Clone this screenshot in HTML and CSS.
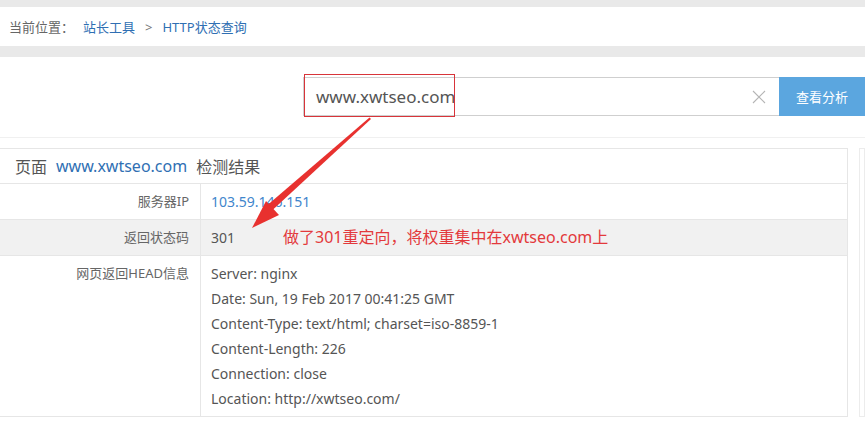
FILE: index.html
```html
<!DOCTYPE html>
<html lang="zh-CN">
<head>
<meta charset="utf-8">
<title>HTTP状态查询</title>
<link rel="stylesheet" href="styles.css">
</head>
<body>
<div class="topbar"></div>
<div class="crumbs">
  <span class="crumb-label">当前位置：</span>
  <a class="crumb-link">站长工具</a>
  <span class="crumb-sep">&gt;</span>
  <a class="crumb-link">HTTP状态查询</a>
</div>
<div class="band"></div>
<div class="search-section">
  <div class="search">
    <div class="search-input">
      <span class="search-text">www.xwtseo.com</span>
      <svg class="clear" width="14" height="14" viewBox="0 0 14 14"><path d="M1 1L13 13M13 1L1 13" stroke="#b5b5b5" stroke-width="1.1" fill="none"/></svg>
    </div>
    <div class="search-btn">查看分析</div>
    <div class="mark-box"></div>
  </div>
</div>
<div class="content">
  <div class="main">
    <div class="row head-row">
      <span class="h-txt">页面</span><span class="h-link">www.xwtseo.com</span><span class="h-txt">检测结果</span>
    </div>
    <div class="row">
      <div class="label">服务器IP</div>
      <div class="value ip">103.59.146.151</div>
    </div>
    <div class="row alt">
      <div class="label">返回状态码</div>
      <div class="value">301<span class="note">做了301重定向，将权重集中在xwtseo.com上</span></div>
    </div>
    <div class="row tall">
      <div class="label">网页返回HEAD信息</div>
      <div class="value lines">
        <div>Server: nginx</div>
        <div>Date: Sun, 19 Feb 2017 00:41:25 GMT</div>
        <div>Content-Type: text/html; charset=iso-8859-1</div>
        <div>Content-Length: 226</div>
        <div>Connection: close</div>
        <div>Location: http://xwtseo.com/</div>
      </div>
    </div>
  </div>
  <div class="side"></div>
</div>
<svg class="arrow" width="865" height="423" viewBox="0 0 865 423">
  <polygon points="369.5,117.5 371,119 272,210.5 267.5,205" fill="#e8312f"/>
  <polygon points="252,228 266,201 279,215" fill="#e8312f"/>
</svg>
</body>
</html>
```
FILE: styles.css
```css
* { box-sizing: border-box; }
html, body { margin: 0; padding: 0; }
body {
  background: #fff;
  font-family: "Noto Sans", "Noto Sans CJK SC", sans-serif;
  color: #555;
  width: 865px;
  height: 423px;
  overflow: hidden;
  position: relative;
}
.topbar { height: 7px; background: #e9e9e9; }
.crumbs {
  height: 39px;
  display: flex;
  align-items: center;
  padding-left: 9px;
  font-size: 13px;
}
.crumb-label { color: #666; margin-right: 9px; }
.crumb-link { color: #2f6fb3; }
.crumb-sep { color: #777; margin: 0 10px 0 10px; }
.band { height: 11px; background: #e9e9e9; }
.search-section {
  height: 81px;
  padding-top: 20px;
  border-bottom: 1px solid #f0f0f0;
}
.search {
  position: relative;
  display: flex;
  margin-left: 303px;
  height: 39px;
}
.search-input {
  width: 476px;
  border: 1px solid #cfcfcf;
  border-right: 0;
  display: flex;
  align-items: center;
  justify-content: space-between;
  padding: 0 13px 0 12px;
}
.search-text { font-size: 17px; color: #555; }
.search-btn {
  flex: 1;
  background: #5ba6df;
  color: #fff;
  font-size: 13px;
  display: flex;
  align-items: center;
  justify-content: center;
}
.mark-box {
  position: absolute;
  left: 1px;
  top: -3px;
  width: 151px;
  height: 43px;
  border: 1.5px solid #d8343a;
}
.content {
  display: flex;
  margin-top: 10px;
  gap: 11px;
}
.main {
  width: 848px;
  border: 1px solid #e6e6e6;
  border-left: 0;
}
.row {
  display: flex;
  height: 36px;
  border-top: 1px solid #e6e6e6;
}
.row.head-row {
  border-top: 0;
  height: 34px;
  align-items: center;
  padding-left: 15px;
  font-size: 16px;
}
.h-txt { color: #555; }
.h-link { color: #2f6fb3; margin: 0 9px 0 9px; }
.row.alt { background: #f1f1f1; }
.row.tall { height: 161px; }
.label {
  width: 201px;
  border-right: 1px solid #e6e6e6;
  text-align: right;
  padding-right: 11px;
  font-size: 13px;
  color: #666;
  line-height: 35px;
}
.row.tall .label { line-height: 25px; padding-top: 5px; }
.value {
  padding-left: 10px;
  font-size: 14px;
  line-height: 35px;
  color: #555;
}
.value.ip { color: #3f86cc; }
.note {
  color: #e3393c;
  font-size: 16px;
  margin-left: 48px;
}
.value.lines { line-height: 25px; padding-top: 5px; }
.side {
  flex: 1;
  border: 1px solid #ececec;
  height: 269px;
}
.arrow {
  position: absolute;
  left: 0;
  top: 0;
  pointer-events: none;
}
```
